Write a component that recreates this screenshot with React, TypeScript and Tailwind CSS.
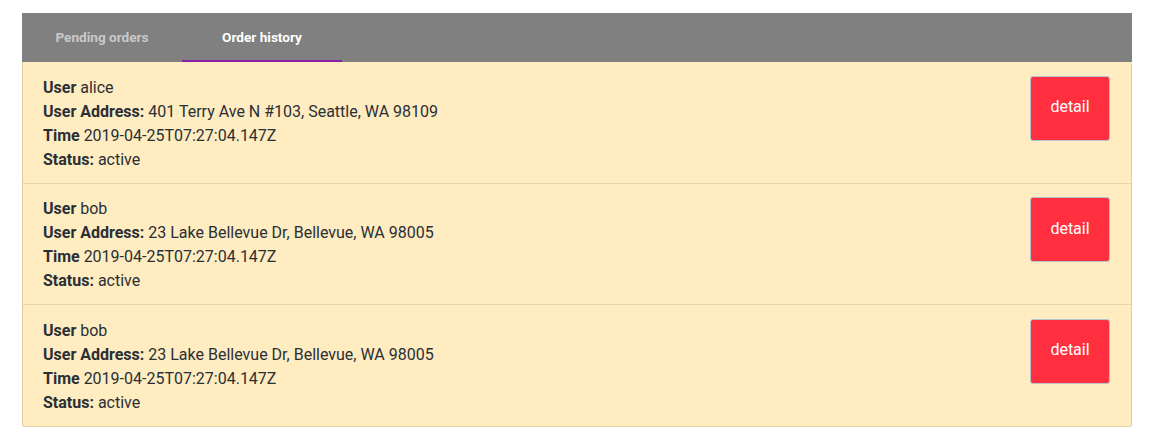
import React from "react";

const orders = [
  { user: "alice", address: "401 Terry Ave N #103, Seattle, WA 98109", time: "2019-04-25T07:27:04.147Z", status: "active" },
  { user: "bob", address: "23 Lake Bellevue Dr, Bellevue, WA 98005", time: "2019-04-25T07:27:04.147Z", status: "active" },
  { user: "bob", address: "23 Lake Bellevue Dr, Bellevue, WA 98005", time: "2019-04-25T07:27:04.147Z", status: "active" },
];

export default function App() {
  return (
    <div className="w-[1158px] h-[446px] bg-white pt-[13px] px-[22px] [font-family:Roboto,'Liberation_Sans',sans-serif]">
      <div className="w-[1110px]">
        <div className="flex h-[49px] bg-[#808080]">
          <div className="w-[160px] flex items-center justify-center text-[13.6px] font-bold text-[#c9c9c9]">
            Pending orders
          </div>
          <div className="w-[160px] flex items-center justify-center text-[13.6px] font-bold text-white border-b-[2px] border-[#8a1fa8] pt-[2px]">
            Order history
          </div>
        </div>
        <div className="bg-[#ffecc0] border border-[#dfcf9f] border-t-0 rounded-tr-[3px] rounded-b-[2px]">
          {orders.map((o, i) => (
            <div
              key={i}
              className={`flex items-start justify-between pl-[20px] pr-[21px] pt-[13.5px] pb-[11px] ${i < orders.length - 1 ? "border-b border-[#e6d6a8]" : ""}`}
            >
              <div className="text-[16px] leading-[24px] text-[#2a2f36]">
                <div><span className="font-bold">User</span> {o.user}</div>
                <div><span className="font-bold">User Address:</span> {o.address}</div>
                <div><span className="font-bold">Time</span> {o.time}</div>
                <div><span className="font-bold">Status:</span> {o.status}</div>
              </div>
              <button className="w-[80px] h-[65px] bg-[#ff2f40] border border-[#b4c6d2] rounded-[3px] text-white text-[16px] flex items-center justify-center pb-[2px]">
                detail
              </button>
            </div>
          ))}
        </div>
      </div>
    </div>
  );
}
